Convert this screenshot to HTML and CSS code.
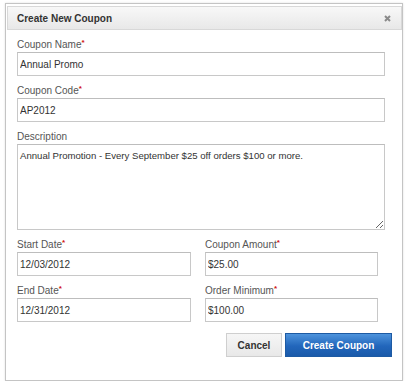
FILE: index.html
```html
<!DOCTYPE html>
<html>
<head>
<meta charset="utf-8">
<link rel="stylesheet" href="styles.css">
</head>
<body>
<div class="dialog">
  <div class="header">
    <span class="title">Create New Coupon</span>
    <svg class="close" width="7" height="7" viewBox="0 0 7 7"><path d="M1 1 L6 6 M6 1 L1 6" stroke="#8a8a8a" stroke-width="2" fill="none"/></svg>
  </div>
  <form class="form">
    <div class="field">
      <label class="label">Coupon Name<span class="req">*</span></label>
      <input class="input" type="text" value="Annual Promo">
    </div>
    <div class="field">
      <label class="label">Coupon Code<span class="req">*</span></label>
      <input class="input" type="text" value="AP2012">
    </div>
    <div class="field">
      <label class="label">Description</label>
      <textarea class="textarea">Annual Promotion - Every September $25 off orders $100 or more.</textarea>
    </div>
    <div class="grid">
      <div class="field">
        <label class="label">Start Date<span class="req">*</span></label>
        <input class="input" type="text" value="12/03/2012">
      </div>
      <div class="field">
        <label class="label">Coupon Amount<span class="req">*</span></label>
        <input class="input" type="text" value="$25.00">
      </div>
      <div class="field">
        <label class="label">End Date<span class="req">*</span></label>
        <input class="input" type="text" value="12/31/2012">
      </div>
      <div class="field">
        <label class="label">Order Minimum<span class="req">*</span></label>
        <input class="input" type="text" value="$100.00">
      </div>
    </div>
    <div class="actions">
      <button type="button" class="btn btn-cancel">Cancel</button>
      <button type="button" class="btn btn-primary">Create Coupon</button>
    </div>
  </form>
</div>
</body>
</html>
```
FILE: styles.css
```css
html, body {
  margin: 0;
  padding: 0;
  background: #fff;
}
body {
  font-family: "Liberation Sans", Arial, sans-serif;
}
.dialog {
  margin: 3px 0 0 5px;
  width: 398px;
  height: 378px;
  box-sizing: border-box;
  border: 1px solid #c4c4c4;
  padding: 2px 0 0 1px;
  background: #fff;
  box-shadow: 0 0 2px rgba(0, 0, 0, 0.12);
}
.header {
  height: 24px;
  box-sizing: border-box;
  border: 1px solid #d8d8d8;
  background: linear-gradient(#f8f8f8, #e8e8e8);
  display: flex;
  align-items: center;
  justify-content: space-between;
  padding: 0 10px 0 9px;
}
.title {
  font-weight: bold;
  font-size: 10px;
  color: #333;
}
.close {
  display: block;
}
.form {
  width: 368px;
  padding: 7px 0 0 10px;
  margin: 0;
}
.field {
  margin-bottom: 7px;
}
.label {
  display: block;
  font-size: 10px;
  line-height: 15px;
  color: #555;
}
.req {
  color: #d01010;
  font-size: 8px;
  font-weight: bold;
  vertical-align: top;
  line-height: 12px;
}
.input, .textarea {
  display: block;
  width: 100%;
  box-sizing: border-box;
  border: 1px solid #c8c8c8;
  border-top-color: #bdbdbd;
  font-family: "Liberation Sans", Arial, sans-serif;
  font-size: 10px;
  color: #333;
  padding: 0 2px;
  margin: 0;
  outline: none;
  background: #fff;
  border-radius: 0;
}
.input {
  height: 24px;
}
.textarea {
  height: 86px;
  padding: 5px 2px;
  resize: both;
  line-height: 12px;
  font-size: 9.6px;
}
.grid {
  display: grid;
  grid-template-columns: 174px 173px;
  column-gap: 14px;
}
.actions {
  display: flex;
  justify-content: flex-end;
  gap: 3px;
  margin: 4px -7px 0 0;
}
.btn {
  height: 24px;
  box-sizing: border-box;
  font-family: "Liberation Sans", Arial, sans-serif;
  font-size: 10px;
  font-weight: bold;
  padding: 0;
  margin: 0;
  border-radius: 0;
  cursor: pointer;
}
.btn-cancel {
  width: 56px;
  color: #333;
  border: 1px solid #cfcfcf;
  background: linear-gradient(#f6f6f6, #e8e8e8);
}
.btn-primary {
  width: 107px;
  color: #fff;
  border: 1px solid #1d5aa3;
  background: linear-gradient(#4d93dc, #2266bb 55%, #1a5aaa);
}
```
